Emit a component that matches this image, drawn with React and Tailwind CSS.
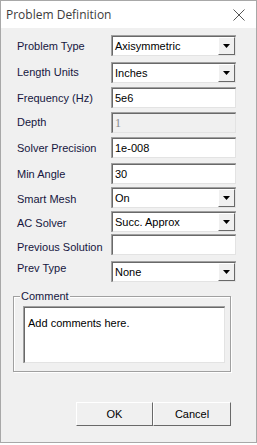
import React from "react";

const F = { fontFamily: '"Liberation Sans", Arial, sans-serif' };

function Sunken({ children, className = "", disabled = false }) {
  return (
    <div className={"w-[125px] h-[21px] border-t border-l border-[#a0a0a0] border-b-white border-r-white " + className}>
      <div className={"w-full h-full border-t border-l border-[#696969] border-b border-r border-b-[#e3e3e3] border-r-[#e3e3e3] flex items-center " + (disabled ? "bg-[#f0f0f0]" : "bg-white")}>
        {children}
      </div>
    </div>
  );
}

function TextBox({ value, disabled }) {
  return (
    <Sunken disabled={disabled}>
      <span className={"pl-[2px] text-[11px] " + (disabled ? "text-[#8a8a8a]" : "text-black")} style={disabled ? { fontFamily: '"Liberation Serif", serif', fontSize: 12 } : F}>
        {value}
      </span>
    </Sunken>
  );
}

function Select({ value }) {
  return (
    <Sunken>
      <span className="pl-[2px] text-[11px] text-black flex-1" style={F}>{value}</span>
      <div className="w-[17px] h-full bg-[#f0f0f0] border-t border-l border-white border-b border-r border-b-[#696969] border-r-[#696969] flex items-center justify-center">
        <svg width="7" height="4" viewBox="0 0 7 4"><path d="M0 0H7L3.5 4Z" fill="#000" /></svg>
      </div>
    </Sunken>
  );
}

function Row({ label, children, mt = "", lab = "pt-[2px]" }) {
  return (
    <div className={"flex items-center h-[21px] " + mt}>
      <div className={"w-[94px] text-[11px] text-[#161640] whitespace-nowrap " + lab} style={F}>{label}</div>
      {children}
    </div>
  );
}

export default function App() {
  return (
    <div className="w-[257px] h-[445px] bg-white">
      <div className="w-[257px] h-[443px] border border-[#a8a8a8] flex flex-col bg-[#f0f0f0]">
        <div className="h-[27px] bg-white flex items-center justify-between pl-[5px] pr-[11px] shrink-0">
          <span className="text-[#3c3c3c] pt-[1px]" style={{ fontFamily: '"Open Sans", "Liberation Sans", sans-serif', fontSize: 12 }}>Problem Definition</span>
          <svg width="12" height="12" viewBox="0 0 12 12"><path d="M0.5 0.5L11.5 11.5M11.5 0.5L0.5 11.5" stroke="#555" strokeWidth="1" /></svg>
        </div>
        <div className="flex flex-col pl-[16px] pt-[7px]">
          <Row label="Problem Type"><Select value="Axisymmetric" /></Row>
          <Row label="Length Units" mt="mt-[6px]" lab=""><Select value="Inches" /></Row>
          <Row label="Frequency (Hz)" mt="mt-[4px]"><TextBox value="5e6" /></Row>
          <Row label="Depth" mt="mt-[4px]" lab=""><TextBox value="1" disabled /></Row>
          <Row label="Solver Precision" mt="mt-[4px]"><TextBox value="1e-008" /></Row>
          <Row label="Min Angle" mt="mt-[5px]"><TextBox value="30" /></Row>
          <Row label="Smart Mesh" mt="mt-[3px]" lab="pt-[3px]"><Select value="On" /></Row>
          <Row label="AC Solver" mt="mt-[3px]" lab="pt-[4px]"><Select value="Succ. Approx" /></Row>
          <Row label="Previous Solution" mt="mt-[2px]" lab="pt-[6px]"><TextBox value="" /></Row>
          <Row label="Prev Type" mt="mt-[6px]" lab="pb-[6px]"><Select value="None" /></Row>
        </div>
        <div className="relative ml-[12px] mt-[14px] w-[218px] h-[76px] border border-[#a0a0a0] shadow-[inset_1px_1px_0_#fff,1px_1px_0_#fff]">
          <span className="absolute left-[6px] top-[-8px] px-[1px] bg-[#f0f0f0] text-[11px] text-[#161640] leading-[14px]" style={F}>Comment</span>
          <div className="ml-[9px] mt-[9px] w-[202px] h-[57px] border-t border-l border-[#a0a0a0] border-b-white border-r-white">
            <div className="w-full h-full border-t border-l border-[#696969] border-b border-r border-b-[#e3e3e3] border-r-[#e3e3e3] bg-white pl-[3px] pt-[1px]">
              <span className="text-[11px] text-black" style={F}>Add comments here.</span>
            </div>
          </div>
        </div>
        <div className="flex ml-[75px] mt-[30px]">
          <button className="w-[77px] h-[24px] bg-[#f0f0f0] border-t border-l border-white border-b border-r border-b-[#696969] border-r-[#696969] text-[11px] text-black" style={F}>OK</button>
          <button className="w-[78px] h-[24px] bg-[#f0f0f0] border-t border-l border-white border-b border-r border-b-[#696969] border-r-[#696969] text-[11px] text-black" style={F}>Cancel</button>
        </div>
      </div>
    </div>
  );
}
